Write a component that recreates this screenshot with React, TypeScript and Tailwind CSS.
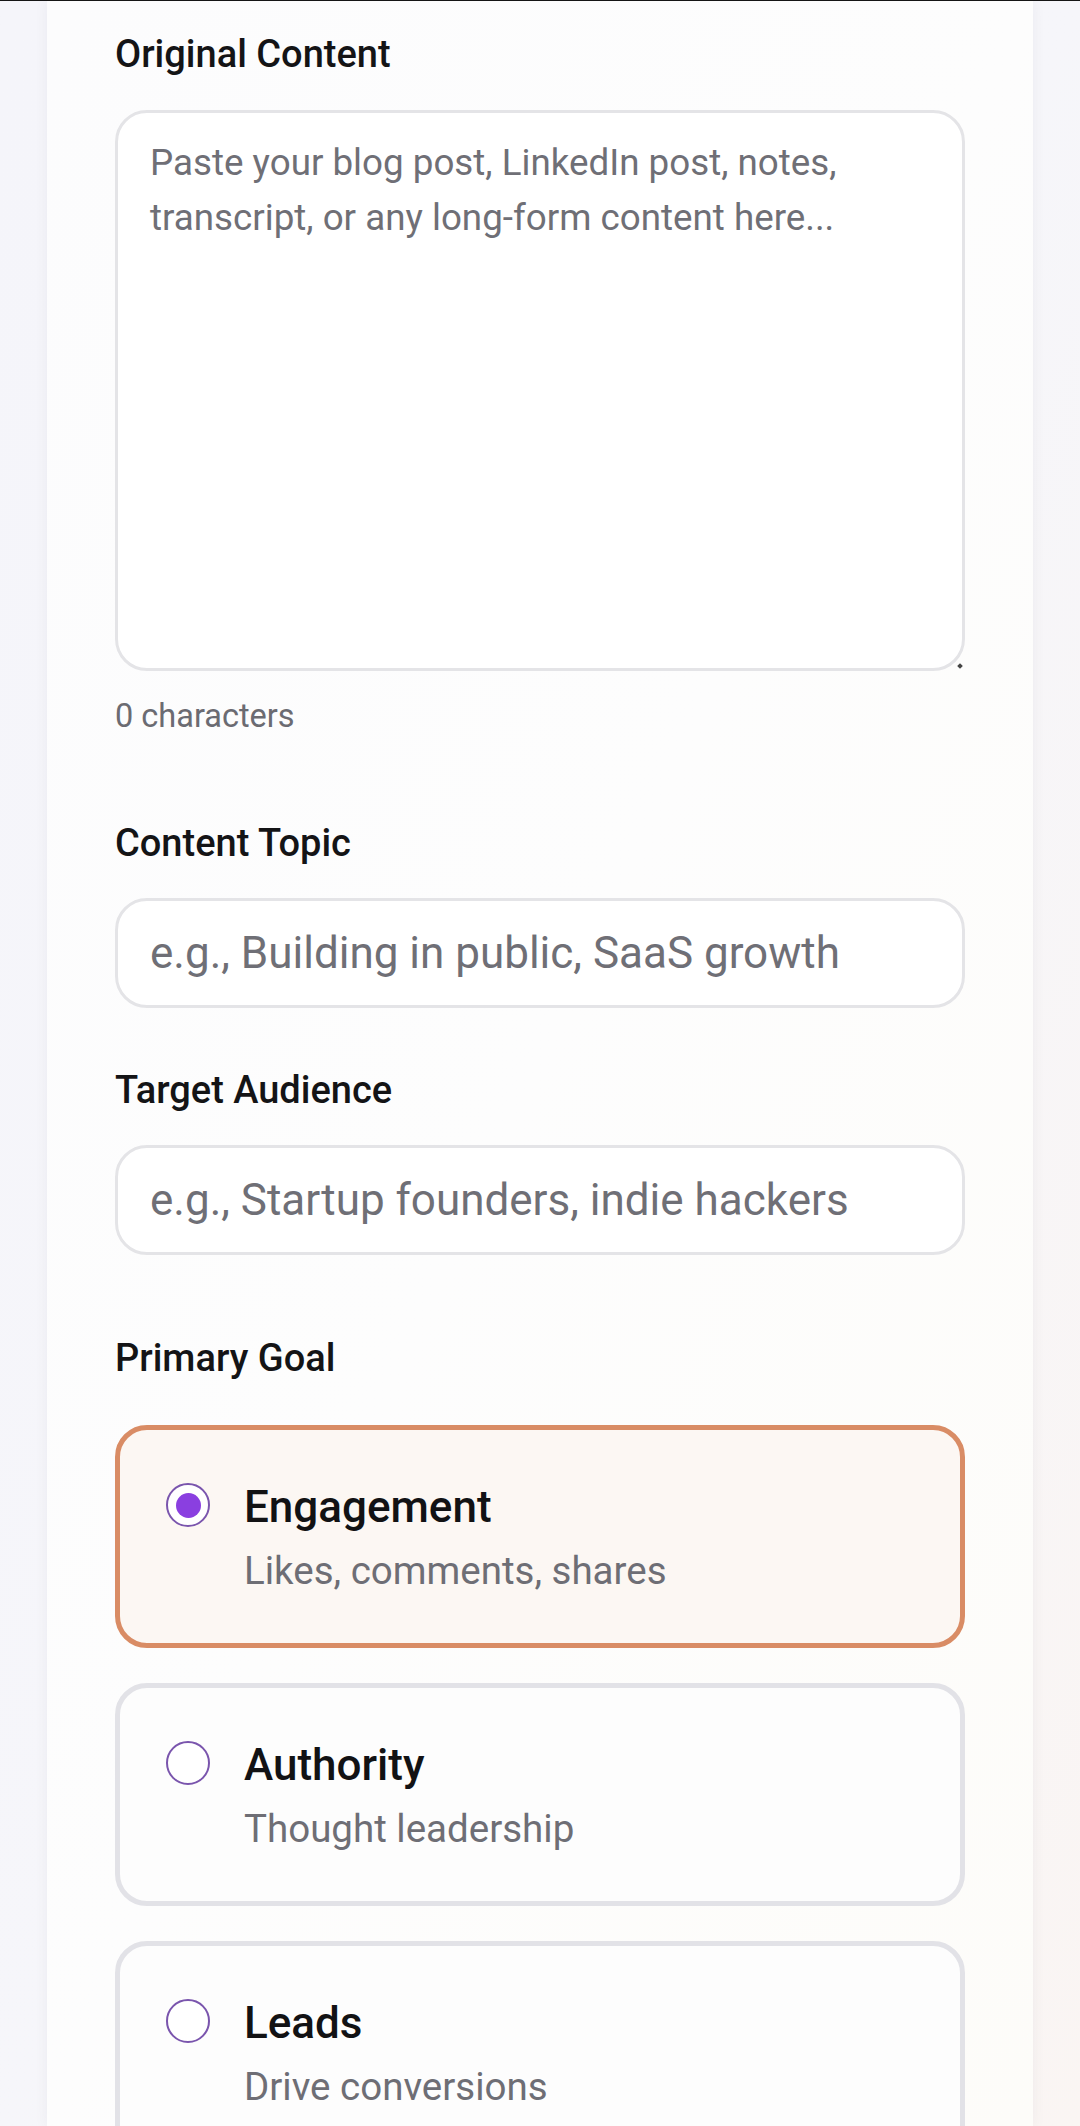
import React from "react";

type Goal = { id: string; title: string; desc: string };

const goals: Goal[] = [
  { id: "engagement", title: "Engagement", desc: "Likes, comments, shares" },
  { id: "authority", title: "Authority", desc: "Thought leadership" },
  { id: "leads", title: "Leads", desc: "Drive conversions" },
];

const FieldLabel: React.FC<{ children: React.ReactNode; className?: string }> = ({ children, className = "" }) => (
  <label className={`block text-[38px] font-medium leading-[52px] text-[#141416] ${className}`}>{children}</label>
);

const Radio: React.FC<{ checked: boolean }> = ({ checked }) => (
  <span className="mt-[7px] flex h-[44px] w-[44px] shrink-0 items-center justify-center rounded-full border-[2px] border-[#7a55ad] bg-white">
    {checked && <span className="h-[25px] w-[25px] rounded-full bg-[#8a3fe0]" />}
  </span>
);

const GoalCard: React.FC<{ goal: Goal; selected: boolean }> = ({ goal, selected }) => (
  <div
    className={`flex gap-[34px] rounded-[32px] border-[5px] pb-[46px] pl-[46px] pr-[40px] pt-[46px] ${
      selected ? "border-[#d98c65] bg-[#fcf7f3]" : "border-[#e2e2e7] bg-[#fdfdfd]"
    }`}
  >
    <Radio checked={selected} />
    <div className="flex flex-col">
      <span className="text-[44px] font-medium leading-[63px] text-[#121214]">{goal.title}</span>
      <span className="mt-[5px] text-[38.5px] leading-[53px] text-[#6e6e75]">{goal.desc}</span>
    </div>
  </div>
);

export default function App() {
  return (
    <div className="relative h-[2126px] overflow-hidden bg-gradient-to-br from-[#f5f5fa] via-[#f6f6fa] to-[#faf5f3] font-['Roboto',sans-serif]">
      <div className="relative z-10 h-px bg-[#151515]" />
      <div className="mx-[47px] h-full bg-gradient-to-br from-[#fcfcfd] via-[#fdfdfd] to-[#fdfcf9] px-[68px] pt-[27px] shadow-[0_0_14px_rgba(30,30,60,0.05)]">
        <FieldLabel>Original Content</FieldLabel>
        <div className="relative mt-[30px]">
          <textarea
            readOnly
            placeholder="Paste your blog post, LinkedIn post, notes, transcript, or any long-form content here..."
            className="block h-[561px] w-full resize-none rounded-[32px] border-[3px] border-[#e4e4e7] bg-white px-[32px] pt-[22px] text-[36.75px] leading-[55px] text-[#141416] outline-none placeholder:text-[#6f6f76]"
          />
          <span className="absolute bottom-[3px] right-[3px] h-[4px] w-[4px] rotate-45 bg-[#444]" />
        </div>
        <p className="mt-[24px] text-[32.5px] leading-[42px] text-[#6b6b72]">0 characters</p>

        <FieldLabel className="mt-[80px]">Content Topic</FieldLabel>
        <input
          readOnly
          placeholder="e.g., Building in public, SaaS growth"
          className="mt-[29px] block h-[110px] w-full rounded-[32px] border-[3px] border-[#e4e4e7] bg-white px-[32px] text-[44px] text-[#141416] outline-none placeholder:text-[#6f6f76]"
        />

        <FieldLabel className="mt-[56px]">Target Audience</FieldLabel>
        <input
          readOnly
          placeholder="e.g., Startup founders, indie hackers"
          className="mt-[29px] block h-[110px] w-full rounded-[32px] border-[3px] border-[#e4e4e7] bg-white px-[32px] text-[44px] text-[#141416] outline-none placeholder:text-[#6f6f76]"
        />

        <FieldLabel className="mt-[77px]">Primary Goal</FieldLabel>
        <div className="mt-[41px] flex flex-col gap-[35px]">
          {goals.map((g) => (
            <GoalCard key={g.id} goal={g} selected={g.id === "engagement"} />
          ))}
        </div>
      </div>
    </div>
  );
}
